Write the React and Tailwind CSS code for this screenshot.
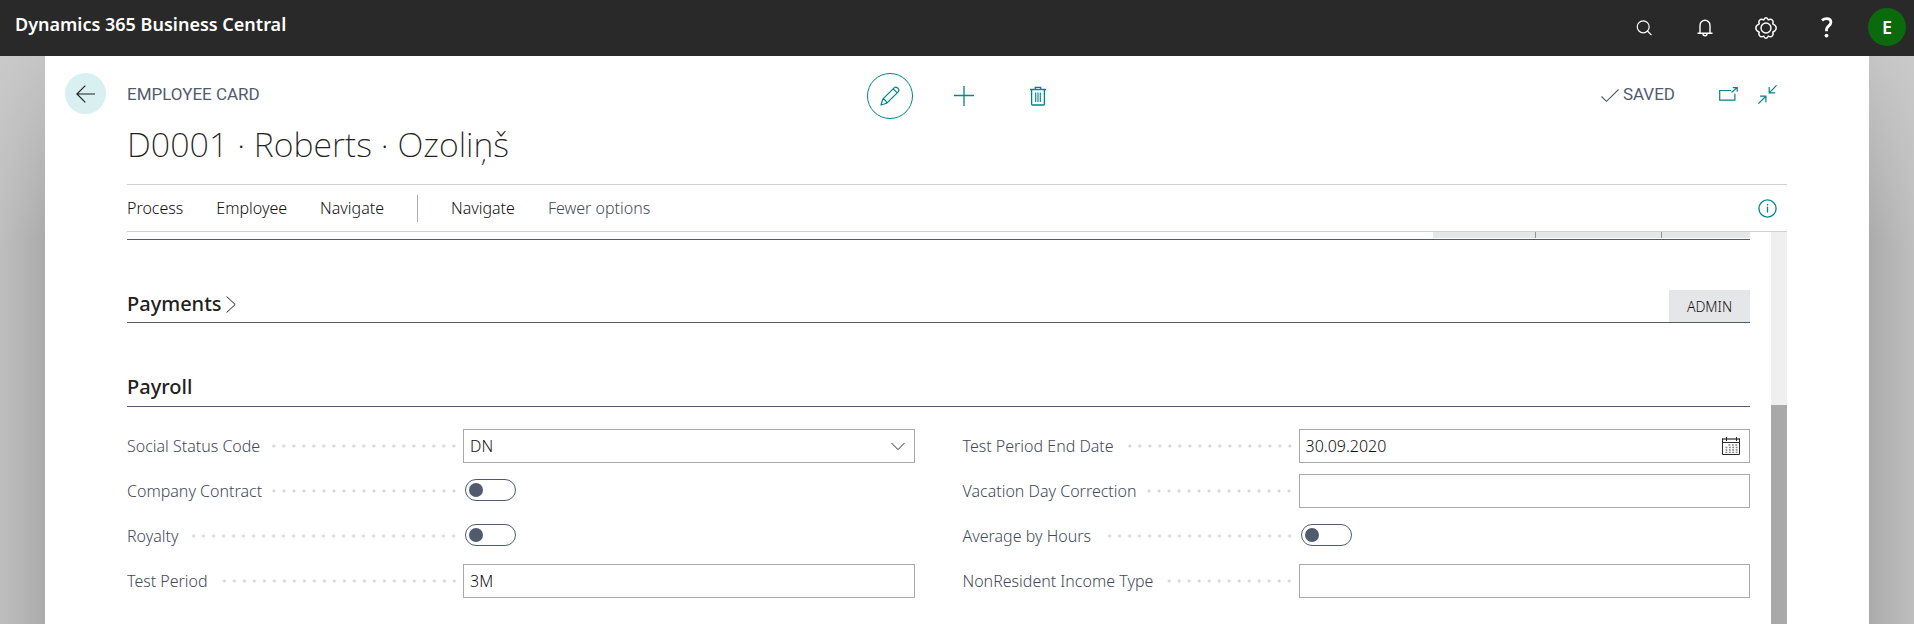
import { useState } from "react";

const sans = "font-['Noto_Sans','Open_Sans',sans-serif]";
const din = "font-['Roboto',sans-serif]";

function Icon({ className, children, ...rest }) {
  return (
    <svg className={className} fill="none" stroke="currentColor" aria-hidden="true" {...rest}>
      {children}
    </svg>
  );
}

function TopBar() {
  const button = "flex h-11 w-[61px] items-center justify-center";
  return (
    <header className="flex h-14 items-start bg-[#292929] pr-2 pl-[15px] text-white">
      <a href="#home" className="mt-2.5 flex-1 text-[18px] leading-7 font-semibold">
        Dynamics 365 Business Central
      </a>
      <nav className="mt-1.5 flex items-center" aria-label="Global">
        <button type="button" aria-label="Search" className={button}>
          <Icon className="size-4" viewBox="0 0 16 16" strokeWidth="1.2">
            <circle cx="7.2" cy="6.8" r="6" />
            <path d="M11.4 11 15.5 15.2" />
          </Icon>
        </button>
        <button type="button" aria-label="Notifications" className={button}>
          <Icon className="h-[18px] w-4" viewBox="0 0 16 18" strokeWidth="1.4">
            <path d="M3 14.2V6.2a5 5 0 0 1 10 0v8M.5 14.3h15M6 14.8a2 2 0 0 0 4 0" />
          </Icon>
        </button>
        <button type="button" aria-label="Settings" className={button}>
          <Icon className="size-[22px]" viewBox="0 0 22 22" strokeWidth="1.4" strokeLinejoin="round">
            <circle cx="11" cy="11" r="5" />
            <path d="M11 .8Q12.6.8 13.2 2.9 15.9 1.5 17.2 3 18.9 4.6 17.7 6.8 21.2 8.2 21.2 11 21.2 13.8 17.7 15.2 18.9 17.4 17.2 19 15.9 20.5 13.2 19.1 12.6 21.2 11 21.2 9.4 21.2 8.8 19.1 6.1 20.5 4.8 19 3.1 17.4 4.3 15.2.8 13.8.8 11 .8 8.2 4.3 6.8 3.1 4.6 4.8 3 6.1 1.5 8.8 2.9 9.4.8 11 .8Z" />
          </Icon>
        </button>
        <button type="button" aria-label="Help" className={button}>
          <Icon className="h-[22px] w-3" viewBox="0 0 12 22" strokeWidth="2.8">
            <path d="M1 3.4C2.6 2.1 4.2 1.7 5.7 1.7 8.3 1.7 9.9 3 9.9 5.2 9.9 8.7 5.5 9 5.5 12.5V14.2" />
            <circle cx="5.5" cy="18.6" r="1.9" fill="currentColor" stroke="none" />
          </Icon>
        </button>
      </nav>
      <button
        type="button"
        aria-label="Account"
        className="mt-2 ml-[11px] size-[38px] rounded-full bg-[#0b6a0b] text-[18px] font-semibold"
      >
        E
      </button>
    </header>
  );
}

function CardHeader() {
  return (
    <div className="flex gap-[21px] pt-[17px] pl-5 pr-[82px]">
      <button
        type="button"
        aria-label="Back"
        className="flex size-[41px] shrink-0 items-center justify-center rounded-full bg-[#d8f0f1] text-[#212121]"
      >
        <Icon className="h-[18px] w-[19px]" viewBox="0 0 19 18" strokeWidth="1.2">
          <path d="M19 9H1M9.3.6.9 9l8.4 8.4" />
        </Icon>
      </button>
      <div className="min-w-0 flex-1">
        <div className="grid h-[46px] grid-cols-[1fr_auto_1fr] items-center">
          <div className={`pb-1 text-[17px] leading-5 text-[#505c6d] ${din}`}>EMPLOYEE CARD</div>
          <div className="-mr-3.5 flex gap-7 text-[#00838a]">
            <button
              type="button"
              aria-label="Edit"
              className="flex size-[46px] items-center justify-center rounded-full border border-[#00838a]"
            >
              <Icon className="size-5" viewBox="0 0 20 20" strokeWidth="1.2" strokeLinejoin="round">
                <path d="M1 19 2.8 13.2 14.2 1.8a2.2 2.2 0 0 1 3.1 0l.9.9a2.2 2.2 0 0 1 0 3.1L6.8 17.2zM13.2 2.8l4 4M2.8 13.2q2.8.2 4 4" />
              </Icon>
            </button>
            <button type="button" aria-label="New" className="flex size-[46px] items-center justify-center">
              <Icon className="size-5" viewBox="0 0 20 20" strokeWidth="1.3">
                <path d="M10 0v20M0 9.5h20" />
              </Icon>
            </button>
            <button type="button" aria-label="Delete" className="flex size-[46px] items-center justify-center">
              <Icon className="h-5 w-4" viewBox="0 0 16 20" strokeWidth="1.3">
                <path d="M0 3.5h16M5.3 3.5V1.3h5.4v2.2M1.6 3.5V18q0 1 1 1h10.8q1 0 1-1V3.5" />
                <path d="M5.7 6.5V16M8 6.5V16M10.3 6.5V16" strokeWidth="1.1" />
              </Icon>
            </button>
          </div>
          <div className="flex items-center justify-end pr-2.5 pb-1 text-[#00838a]">
            <div className={`mr-11 flex items-center gap-1 text-[17px] leading-5 text-[#505c6d] ${din}`}>
              <Icon className="mt-0.5 h-[13px] w-[18px]" viewBox="0 0 18 13" strokeWidth="1.1">
                <path d="M.5 7.5 5.5 12.3 17.5.5" />
              </Icon>
              SAVED
            </div>
            <button type="button" aria-label="Open in new window" className="mr-5">
              <Icon className="h-[14px] w-[19px]" viewBox="0 0 19 14" strokeWidth="1.2">
                <path d="M12 3.5H.7v9.7h15.2V6.5M12.5 5.5 17.8.9M13.8.7h4.4v4" />
              </Icon>
            </button>
            <button type="button" aria-label="Exit full width">
              <Icon className="size-[19px]" viewBox="0 0 19 19" strokeWidth="1.2">
                <path d="M18.6.4 11.2 7.8M11.2 2v5.9h6M.4 18.6 7.9 11.2M2 11.2h5.9v6" />
              </Icon>
            </button>
          </div>
        </div>
        <h1 className="flex h-[65px] items-start text-[34px] leading-[50px] font-extralight text-[#212121]">
          D0001 · Roberts · Ozoliņš
        </h1>
      </div>
    </div>
  );
}

function ActionBar() {
  return (
    <nav
      aria-label="Actions"
      className="mx-[82px] flex h-12 items-center border-y border-[#d0d3d6] pr-2.5 text-[16px] font-light text-[#111111]"
    >
      <div className="flex items-center gap-[33px]">
        <button type="button">Process</button>
        <button type="button">Employee</button>
        <button type="button">Navigate</button>
        <span className="h-[27px] w-px bg-[#a6adb6]" />
        <button type="button">Navigate</button>
        <button type="button" className="text-[#3f4a5c]">Fewer options</button>
      </div>
      <button type="button" aria-label="Details" className="ml-auto text-[#00838a]">
        <Icon className="size-[19px]" viewBox="0 0 19 19" strokeWidth="1.3">
          <circle cx="9.5" cy="9.5" r="8.6" />
          <path d="M9.5 7.8v5.7M9.5 5v1.6" />
        </Icon>
      </button>
    </nav>
  );
}

function Field({ label, id, children }) {
  return (
    <div className="flex h-[34px] items-center">
      <div className="flex w-[336px] shrink-0 items-center pr-1">
        <label htmlFor={id} className="text-[16px] font-light text-[#3f4a5c]">{label}</label>
        <span className="ml-2.5 h-1 flex-1 bg-[radial-gradient(circle,#d4d7da_1px,transparent_2px)] bg-[length:10px_4px] bg-right bg-repeat-x" />
      </div>
      <div className="relative flex min-w-0 flex-1 items-center">{children}</div>
    </div>
  );
}

const box = "h-[34px] w-full appearance-none rounded-none border border-[#a9a9a9] bg-white px-1.5 text-[16px] font-light text-[#111111]";

function Toggle({ id }) {
  const [on, setOn] = useState(false);
  return (
    <input
      id={id}
      type="checkbox"
      role="switch"
      checked={on}
      onChange={() => setOn(!on)}
      className="mb-0.5 ml-0.5 flex h-[22px] w-[51px] appearance-none items-center rounded-full border border-[#505c6d] px-[3px] before:size-[14px] before:rounded-full before:bg-[#505c6d] checked:justify-end"
    />
  );
}

function TextField({ id, value = "" }) {
  return <input id={id} type="text" defaultValue={value} className={box} />;
}

function Payroll() {
  return (
    <div className="grid grid-cols-2 gap-x-12 pt-[22px] pb-8">
      <div className="flex flex-col gap-[11px]">
        <Field label="Social Status Code" id="status">
          <select id="status" className={box} defaultValue="DN">
            <option>DN</option>
          </select>
          <Icon className="pointer-events-none absolute right-2.5 h-[9px] w-[14px] text-[#212121]" viewBox="0 0 15 9" strokeWidth="1">
            <path d="M.6.8 7.5 7.8 14.4.8" />
          </Icon>
        </Field>
        <Field label="Company Contract" id="contract"><Toggle id="contract" /></Field>
        <Field label="Royalty" id="royalty"><Toggle id="royalty" /></Field>
        <Field label="Test Period" id="period"><TextField id="period" value="3M" /></Field>
      </div>
      <div className="flex flex-col gap-[11px]">
        <Field label="Test Period End Date" id="end">
          <TextField id="end" value="30.09.2020" />
          <button type="button" aria-label="Pick a date" className="absolute right-2.5 text-[#2a2a2a]">
            <Icon className="size-[18px]" viewBox="0 0 18 18" strokeWidth="1">
              <path d="M0 2h18" strokeWidth="2" opacity=".6" />
              <path d="M.5 1.5v16h17v-16M0 5.5h18M4.5 0v4M14.5 0v4" />
              <path d="M6.5 8h9M3.5 10.5h12M3.5 13h12M3.5 15.3h12" strokeWidth="1.3" strokeDasharray="1.8 1.6" opacity=".6" />
            </Icon>
          </button>
        </Field>
        <Field label="Vacation Day Correction" id="vacation"><TextField id="vacation" /></Field>
        <Field label="Average by Hours" id="average"><Toggle id="average" /></Field>
        <Field label="NonResident Income Type" id="income"><TextField id="income" /></Field>
      </div>
    </div>
  );
}

export default function App() {
  return (
    <div className={`flex h-screen flex-col overflow-hidden ${sans}`}>
      <TopBar />
      <div className="flex min-h-0 flex-1 bg-white">
        <div className="w-[45px] shrink-0 bg-[linear-gradient(170deg,#cccccccc,#cccccc00_190px),linear-gradient(90deg,#bebebe,#ababab)]" />
        <main className="flex min-w-0 flex-1 flex-col">
          <CardHeader />
          <ActionBar />
          <div className="mx-[82px] flex min-h-0 flex-1">
            <div className="mr-[21px] min-w-0 flex-1 overflow-hidden">
              <div className="flex h-2 items-start justify-end border-b border-[#505c6d]">
                <span className="h-1.5 w-[102px] bg-[#e5e6e8]" />
                <span className="h-1.5 w-[126px] border-l border-[#8f949a] bg-[#e5e6e8]" />
                <span className="h-1.5 w-[89px] border-l border-[#8f949a] bg-[#e5e6e8]" />
              </div>
              <section className="flex h-[83px] items-end justify-between border-b border-[#505c6d]">
                <h2>
                  <button type="button" className="flex h-9 items-center gap-1 text-[20px] font-medium text-[#212121]">
                    Payments
                    <Icon className="h-[17px] w-[10px]" viewBox="0 0 10 17" strokeWidth="1">
                      <path d="M.6.5 9.2 8.5.6 16.5" />
                    </Icon>
                  </button>
                </h2>
                <button type="button" className="h-8 w-[81px] bg-[#e5e6e8] text-[14px] font-light text-[#111111]">ADMIN</button>
              </section>
              <section>
                <h2 className="flex h-[84px] items-end border-b border-[#505c6d]">
                  <button type="button" className="flex h-[38px] items-center text-[20px] font-medium text-[#212121]">Payroll</button>
                </h2>
                <Payroll />
              </section>
            </div>
            <div className="flex w-4 shrink-0 flex-col bg-[#efefef]" aria-hidden="true">
              <div className="mt-[173px] flex-1 bg-[#a9a9a9]" />
            </div>
          </div>
        </main>
        <div className="w-[45px] shrink-0 bg-[linear-gradient(190deg,#cccccccc,#cccccc00_190px),linear-gradient(270deg,#bebebe,#ababab)]" />
      </div>
    </div>
  );
}
